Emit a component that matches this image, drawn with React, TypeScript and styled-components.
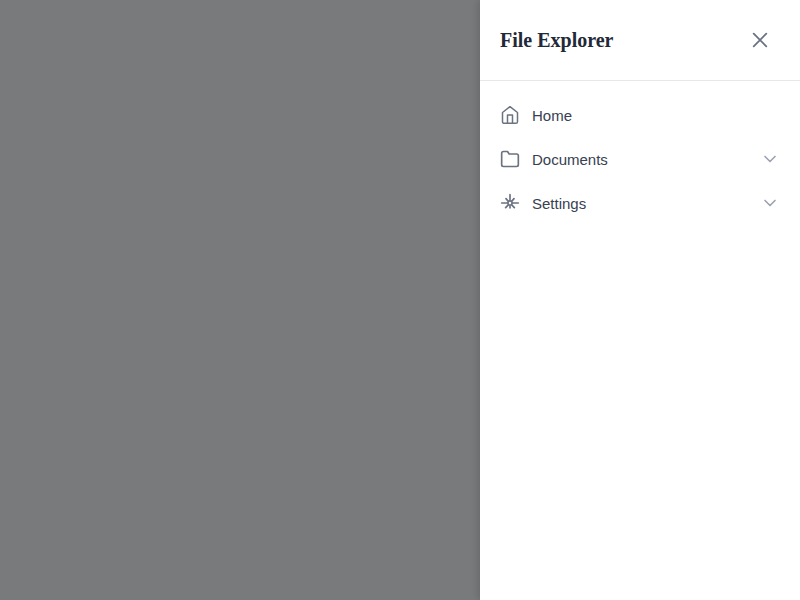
import React from "react";
import styled, { createGlobalStyle } from "styled-components";

const GlobalStyle = createGlobalStyle`
  * { box-sizing: border-box; }
  body { margin: 0; background: #f9fafb; }
`;

const Overlay = styled.div`
  height: 100vh;
  display: flex;
  justify-content: flex-end;
  overflow: hidden;
  background: #797a7b;
`;

const Drawer = styled.aside`
  width: 320px;
  height: 100%;
  display: flex;
  flex-direction: column;
  background: #fff;
  box-shadow: -2px 0 8px rgba(0, 0, 0, 0.15);
`;

const Header = styled.header`
  height: 81px;
  flex: none;
  display: flex;
  align-items: center;
  justify-content: space-between;
  padding: 0 20px;
  border-bottom: 1px solid #e5e7eb;
`;

const Title = styled.h2`
  margin: 0;
  font: 700 20px/24px "Liberation Serif", serif;
  color: #1f2937;
`;

const CloseButton = styled.button`
  width: 40px;
  height: 40px;
  display: flex;
  align-items: center;
  justify-content: center;
  padding: 0;
  border: 0;
  background: none;
  color: #6b7280;
`;

const Nav = styled.nav`
  display: flex;
  flex-direction: column;
  padding: 12px 0;
`;

const Item = styled.a`
  height: 44px;
  display: flex;
  align-items: center;
  gap: 12px;
  padding: 0 20px;
  color: #6b7280;
`;

const Label = styled.span`
  flex: 1;
  padding-top: 1px;
  font: 400 15px/20px "Liberation Sans", sans-serif;
  color: #374151;
`;

const Icon = styled.svg<{ $size: number; $stroke?: number }>`
  width: ${(p) => p.$size}px;
  height: ${(p) => p.$size}px;
  flex: none;
  display: block;
  fill: none;
  stroke: currentColor;
  stroke-width: ${(p) => p.$stroke ?? 2};
  stroke-linecap: round;
  stroke-linejoin: round;
`;

const ItemIcon = styled(Icon)`
  margin-bottom: 1px;
`;

const Chevron = styled(ItemIcon)`
  color: #9ca3af;
`;

const items = [
  {
    label: "Home",
    path: "M3 9l9-7 9 7v11a2 2 0 0 1-2 2H5a2 2 0 0 1-2-2z M9 22V12h6v10",
    stroke: 1.8,
    expandable: false,
  },
  {
    label: "Documents",
    path: "M22 19a2 2 0 0 1-2 2H4a2 2 0 0 1-2-2V5a2 2 0 0 1 2-2h5l2 3h9a2 2 0 0 1 2 2z",
    stroke: 2,
    expandable: true,
  },
  {
    label: "Settings",
    path: "M14.5 12a2.5 2.5 0 1 1-5 0a2.5 2.5 0 0 1 5 0 M12 2v6 M12 16v2 M2 12h7 M15 12h7 M7.2 6.8l2.8 3.2 M16.8 6.8l-2.8 3.2 M6.8 17.6l3.4-3.6 M17.2 17.6l-3.4-3.6",
    stroke: 2,
    expandable: true,
  },
];

export default function App() {
  return (
    <>
      <GlobalStyle />
      <Overlay>
        <Drawer>
          <Header>
            <Title>File Explorer</Title>
            <CloseButton aria-label="Close">
              <Icon $size={24} $stroke={1.8} viewBox="0 0 24 24">
                <path d="M18.3 5.7L5.7 18.3M5.7 5.7l12.6 12.6" />
              </Icon>
            </CloseButton>
          </Header>
          <Nav>
            {items.map((item) => (
              <Item key={item.label}>
                <ItemIcon $size={20} $stroke={item.stroke} viewBox="0 0 24 24">
                  <path d={item.path} />
                </ItemIcon>
                <Label>{item.label}</Label>
                {item.expandable && (
                  <Chevron $size={20} viewBox="0 0 24 24">
                    <path d="M6 9l6 6 6-6" />
                  </Chevron>
                )}
              </Item>
            ))}
          </Nav>
        </Drawer>
      </Overlay>
    </>
  );
}
